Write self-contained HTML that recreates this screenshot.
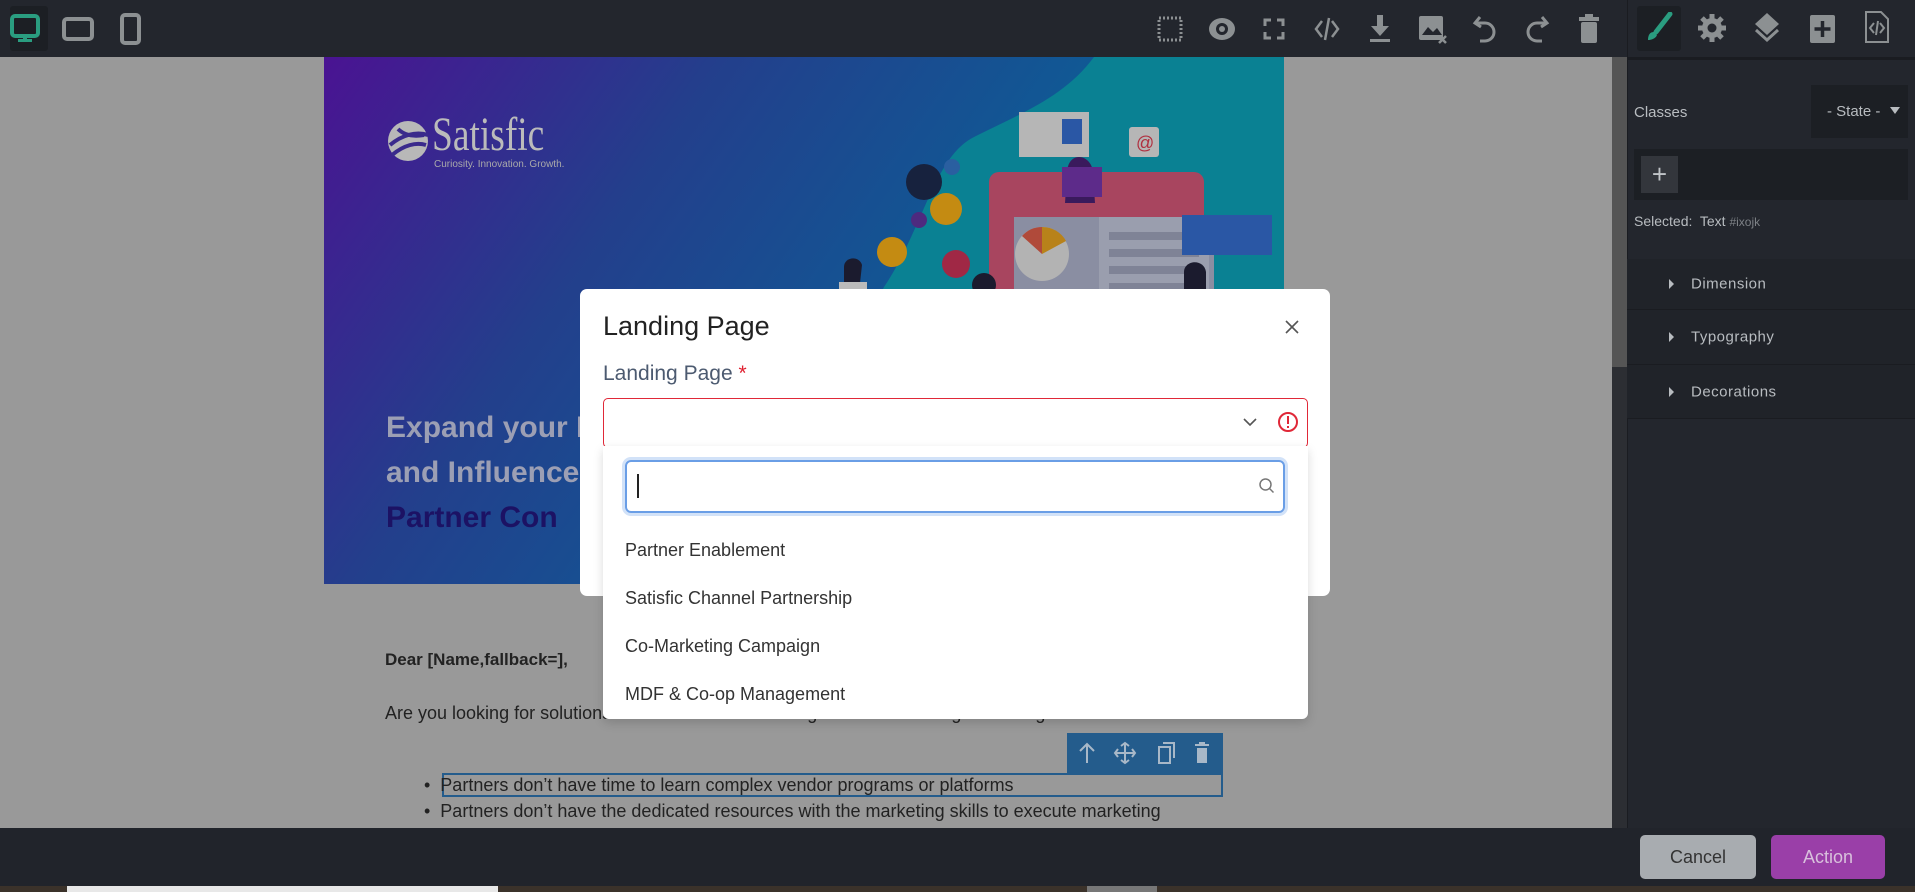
<!DOCTYPE html>
<html><head><meta charset="utf-8"><style>
*{box-sizing:border-box;margin:0;padding:0}
body{width:1915px;height:892px;overflow:hidden;background:#999;font-family:"Liberation Sans",sans-serif;position:relative}
.abs{position:absolute}
.top{left:0;top:0;width:1627px;height:57px;background:#23262d}
.rp{left:1627px;top:0;width:288px;height:828px;background:#23262d}
.bot{left:0;top:828px;width:1915px;height:59px;background:#21242b}
.strip{left:0;top:886px;width:1915px;height:6px;background:#3b322a}
.sec{position:absolute;left:1627px;width:288px;border-bottom:1px solid #1a1c21;background:#202329;color:#b8bcc0;font-size:15px;letter-spacing:.5px}
.sec span{position:absolute;left:64px;top:50%;transform:translateY(-50%)}
.sec i{position:absolute;left:42px;top:50%;margin-top:-5px;border-left:5px solid #b8bcc0;border-top:5px solid transparent;border-bottom:5px solid transparent}
.dd{font-size:18px;color:#333;position:absolute;left:625px}
</style></head><body>
<div class="abs top"></div>
<div class="abs" style="left:10px;top:6px;width:38px;height:45px;background:#1c1f24;border-radius:3px"></div>
<svg class="abs" style="left:10px;top:14px" width="30" height="30" viewBox="0 0 30 30"><rect x="2" y="2" width="26" height="20" rx="3" fill="none" stroke="#2a9d80" stroke-width="4"/><rect x="13" y="22" width="4" height="4" fill="#2a9d80"/><rect x="8" y="25" width="14" height="3" fill="#2a9d80"/></svg>
<svg class="abs" style="left:62px;top:17px" width="32" height="24"><rect x="2" y="2" width="28" height="20" rx="3" fill="none" stroke="#8c9092" stroke-width="4"/></svg>
<svg class="abs" style="left:120px;top:13px" width="22" height="32"><rect x="2" y="2" width="17" height="28" rx="3" fill="none" stroke="#8c9092" stroke-width="4"/></svg>
<svg class="abs" style="left:1157px;top:16px" width="26" height="26"><rect x="2" y="2" width="22" height="22" fill="none" stroke="#8c9092" stroke-width="3" stroke-dasharray="2 2"/></svg>
<svg class="abs" style="left:1207px;top:16px" width="30" height="26"><ellipse cx="15" cy="13" rx="13" ry="11" fill="#8c9092"/><circle cx="15" cy="13" r="6" fill="#23262d"/><circle cx="15" cy="13" r="3" fill="#8c9092"/></svg>
<svg class="abs" style="left:1263px;top:18px" width="22" height="22" fill="none" stroke="#8c9092" stroke-width="3"><path d="M2 8V2h6M14 2h6v6M20 14v6h-6M8 20H2v-6"/></svg>
<svg class="abs" style="left:1313px;top:15px" width="28" height="28" fill="none" stroke="#8c9092" stroke-width="2.5"><path d="M9 6L3 14l6 8M19 6l6 8-6 8M16 3l-4 22"/></svg>
<svg class="abs" style="left:1369px;top:15px" width="22" height="28" fill="#8c9092"><path d="M8 0h6v11h6l-9 10-9-10h6z"/><rect x="1" y="24" width="20" height="3"/></svg>
<svg class="abs" style="left:1418px;top:15px" width="30" height="30" fill="#8c9092"><rect x="1" y="1" width="24" height="24" rx="2"/><path d="M4 20l6-8 5 5 4-4 5 7z" fill="#23262d"/><path d="M21 21l7 7M28 21l-7 7" stroke="#8c9092" stroke-width="2.5"/></svg>
<svg class="abs" style="left:1472px;top:15px" width="26" height="28" fill="none" stroke="#8c9092" stroke-width="3"><path d="M8 2L3 8l6 4M3 8h10a9 9 0 1 1 0 18H8"/></svg>
<svg class="abs" style="left:1524px;top:15px" width="26" height="28" fill="none" stroke="#8c9092" stroke-width="3"><path d="M18 2l5 6-6 4M23 8H13a9 9 0 1 0 0 18h5"/></svg>
<svg class="abs" style="left:1578px;top:14px" width="22" height="30" fill="#8c9092"><rect x="1" y="3" width="20" height="4"/><rect x="7" y="0" width="8" height="4"/><rect x="3" y="8" width="16" height="21" rx="2"/></svg>
<div class="abs rp"></div>
<div class="abs" style="left:1627px;top:0;width:1px;height:828px;background:#1a1c21"></div>
<div class="abs" style="left:1637px;top:6px;width:44px;height:45px;background:#1c1f24;border-radius:3px"></div>
<svg class="abs" style="left:1644px;top:12px" width="30" height="32"><path d="M26 2L12 20" stroke="#2a9d80" stroke-width="5" stroke-linecap="round"/><path d="M10 20c-4 0-6 3-6 8 4 0 8-2 9-5z" fill="#2a9d80"/></svg>
<svg class="abs" style="left:1697px;top:13px" width="30" height="30" viewBox="0 0 30 30"><circle cx="15" cy="15" r="10" fill="#8c9092"/><g stroke="#8c9092" stroke-width="5"><path d="M15 1v28M1 15h28M5 5l20 20M25 5L5 25"/></g><circle cx="15" cy="15" r="4.5" fill="#23262d"/></svg>
<svg class="abs" style="left:1753px;top:13px" width="28" height="32" fill="#8c9092"><path d="M14 0l12 11-12 11L2 11z"/><path d="M3 17l11 10 11-10" fill="none" stroke="#8c9092" stroke-width="3"/></svg>
<svg class="abs" style="left:1810px;top:15px" width="26" height="28"><rect x="0" y="0" width="25" height="28" rx="2" fill="#8c9092"/><path d="M12.5 6v16M4.5 14h16" stroke="#23262d" stroke-width="3.5"/></svg>
<svg class="abs" style="left:1864px;top:10px" width="26" height="34" fill="none" stroke="#8c9092" stroke-width="2"><path d="M2 2h15l7 7v23H2z"/><path d="M10 13l-4 5 4 5M16 13l4 5-4 5M14 11l-2 14"/></svg>
<div class="abs" style="left:1627px;top:57px;width:288px;height:3px;background:#1a1c21"></div>
<div class="abs" style="left:1634px;top:104px;color:#b8bcc0;font-size:15px">Classes</div>
<div class="abs" style="left:1811px;top:85px;width:97px;height:53px;background:#1c1f24;color:#b8bcc0;font-size:15px;line-height:53px;padding-left:16px">- State -<span style="position:absolute;right:8px;top:22px;border-top:7px solid #b8bcc0;border-left:5px solid transparent;border-right:5px solid transparent"></span></div>
<div class="abs" style="left:1634px;top:149px;width:274px;height:51px;background:#1c1f24"></div>
<div class="abs" style="left:1641px;top:156px;width:37px;height:37px;background:#33363c;color:#c0c4c8;font-size:26px;text-align:center;line-height:36px">+</div>
<div class="abs" style="left:1634px;top:213px;color:#b8bcc0;font-size:14px">Selected:&nbsp; Text <span style="color:#7d8186;font-size:12px">#ixojk</span></div>
<div class="sec" style="top:259px;height:51px"><i></i><span>Dimension</span></div>
<div class="sec" style="top:310px;height:55px"><i></i><span>Typography</span></div>
<div class="sec" style="top:365px;height:54px"><i></i><span>Decorations</span></div>
<div class="abs" style="left:1612px;top:57px;width:15px;height:771px;background:#2c2e33"></div>
<div class="abs" style="left:1612px;top:57px;width:15px;height:310px;background:#555"></div>
<!-- banner -->
<div class="abs" style="left:324px;top:57px;width:960px;height:527px;background:linear-gradient(125deg,#4a1392 0%,#233f8c 30%,#0f5a95 60%,#07689a 100%);overflow:hidden">
<svg class="abs" style="left:0;top:0" width="960" height="527">
<path d="M770 0C740 40 700 55 650 80 610 100 600 170 560 230 520 300 560 527 560 527H960V0z" fill="#0a8193"/>
<path d="M720 527c20-120 120-210 240-240V527z" fill="#0b5e9c"/>
<rect x="690" y="235" width="230" height="292" rx="8" fill="#8a8ea2"/>
<rect x="665" y="115" width="215" height="140" rx="10" fill="#a8455f"/>
<rect x="665" y="140" width="215" height="10" fill="#a8455f"/>
<rect x="690" y="160" width="200" height="200" fill="#8a8ea2"/>
<rect x="775" y="160" width="110" height="200" fill="#9a9eae"/>
<g fill="#7f8396"><rect x="785" y="175" width="90" height="8"/><rect x="785" y="192" width="90" height="8"/><rect x="785" y="209" width="90" height="8"/><rect x="785" y="226" width="90" height="8"/><rect x="785" y="243" width="90" height="8"/></g>
<circle cx="718" cy="197" r="27" fill="#b3b3b3"/><path d="M718 197V170a27 27 0 0 1 24 14z" fill="#b8821a"/><path d="M718 197l-20-18a27 27 0 0 1 20-9z" fill="#b04a3a"/>
<rect x="695" y="55" width="70" height="45" fill="#b6b6b6"/><rect x="738" y="62" width="20" height="25" fill="#2a57a5"/>
<rect x="805" y="70" width="30" height="30" rx="3" fill="#b6b6b6"/><text x="812" y="92" font-size="18" fill="#b03040" font-family="Liberation Sans">@</text>
<rect x="858" y="158" width="90" height="40" fill="#2a57a5"/>
<path d="M755 100c-8 0-12 8-12 16l-2 30h30l-2-30c0-8-6-16-14-16z" fill="#3a1a5c"/>
<rect x="738" y="110" width="40" height="30" fill="#5d2b8a"/>
<circle cx="600" cy="125" r="18" fill="#17223e"/><circle cx="622" cy="152" r="16" fill="#c48b12"/><circle cx="595" cy="163" r="8" fill="#4d2a7f"/><circle cx="628" cy="110" r="8" fill="#2a5fa0"/>
<circle cx="568" cy="195" r="15" fill="#c48b12"/>
<circle cx="632" cy="207" r="14" fill="#a02845"/>
<path d="M520 210c0-10 15-12 18-2l-2 18h-16z" fill="#1b1b2e"/><rect x="515" y="225" width="28" height="50" fill="#bbb"/>
<circle cx="660" cy="228" r="12" fill="#1b1b2e"/>
<path d="M860 215c0-12 20-14 22 0v20h-22z" fill="#1b1b2e"/><rect x="860" y="235" width="40" height="50" fill="#0d4f8e"/>
</svg>
<svg class="abs" style="left:60px;top:58px" width="50" height="52"><circle cx="24" cy="26" r="20" fill="#b8b8b8"/><path d="M6 30c12-10 26-14 38-10M8 40c12-10 24-13 34-10M14 14c6 6 14 8 26 6" stroke="#3a2a8c" stroke-width="4" fill="none"/></svg>
<div class="abs" style="left:108px;top:50px;color:#bbb;font-family:'Liberation Serif',serif;font-size:48px;transform:scaleX(.78);transform-origin:left">Satisfic</div>
<div class="abs" style="left:110px;top:102px;color:#aaa;font-size:10px">Curiosity. Innovation. Growth.</div>
<div class="abs" style="left:62px;top:348px;color:#9c9fb4;font-size:30px;font-weight:bold;line-height:45px">Expand your P<br>and Influence<br><span style="color:#1c1264">Partner Con</span></div>
</div>
<div class="abs" style="left:385px;top:650px;color:#222;font-size:17px;font-weight:bold">Dear [Name,fallback=],</div>
<div class="abs" style="left:385px;top:703px;color:#222;font-size:18px">Are you looking for solutions to overcome the challenges of the following marketing</div>
<div class="abs" style="left:1067px;top:733px;width:156px;height:40px;background:#245c8c"></div>
<svg class="abs" style="left:1075px;top:741px" width="140" height="24" fill="none" stroke="#a8b8c8" stroke-width="2"><path d="M12 22V3M5 10l7-7 7 7"/><path d="M50 2v20M40 12h20M46 5l4-3 4 3M46 19l4 3 4-3M43 8l-3 4 3 4M57 8l3 4-3 4"/><rect x="84" y="6" width="11" height="16"/><path d="M88 2h11v15"/><path d="M120 4h14M124 2h6"/><rect x="122" y="7" width="10" height="15" fill="#a8b8c8" stroke="none"/></svg>
<div class="abs" style="left:442px;top:773px;width:781px;height:24px;border:2px solid #245c8c"></div>
<div class="abs" style="left:424px;top:774px;color:#222;font-size:18px;line-height:22px">•&nbsp; Partners don’t have time to learn complex vendor programs or platforms</div>
<div class="abs" style="left:424px;top:800px;color:#222;font-size:18px;line-height:22px">•&nbsp; Partners don’t have the dedicated resources with the marketing skills to execute marketing</div>
<!-- modal -->
<div class="abs" style="left:580px;top:289px;width:750px;height:307px;background:#fff;border-radius:7px"></div>
<div class="abs" style="left:603px;top:311px;color:#222;font-size:27px">Landing Page</div>
<svg class="abs" style="left:1285px;top:320px" width="14" height="14" stroke="#555" stroke-width="1.6"><path d="M1 1l12 12M13 1L1 13"/></svg>
<div class="abs" style="left:603px;top:362px;color:#4c5a70;font-size:21px">Landing Page <span style="color:#e02030">*</span></div>
<div class="abs" style="left:603px;top:398px;width:705px;height:50px;border:1.5px solid #e02838;border-radius:5px"></div>
<svg class="abs" style="left:1242px;top:416px" width="16" height="12" fill="none" stroke="#555" stroke-width="1.6"><path d="M2 3l6 6 6-6"/></svg>
<svg class="abs" style="left:1277px;top:411px" width="22" height="22" fill="none" stroke="#e02838" stroke-width="2"><circle cx="11" cy="11" r="9"/><path d="M11 5v8M11 15v2"/></svg>
<div class="abs" style="left:603px;top:446px;width:705px;height:273px;background:#fff;border-radius:0 0 6px 6px;box-shadow:0 4px 10px rgba(0,0,0,.15)"></div>
<div class="abs" style="left:625px;top:460px;width:660px;height:53px;border:2px solid #6a9ee6;border-radius:6px;box-shadow:0 0 0 3px #d2e2f8"></div>
<div class="abs" style="left:637px;top:474px;width:2px;height:24px;background:#222"></div>
<svg class="abs" style="left:1258px;top:477px" width="18" height="18" fill="none" stroke="#777" stroke-width="1.5"><circle cx="7.5" cy="7.5" r="5.5"/><path d="M11.5 11.5l4 4"/></svg>
<div class="dd" style="top:540px">Partner Enablement</div>
<div class="dd" style="top:588px">Satisfic Channel Partnership</div>
<div class="dd" style="top:636px">Co-Marketing Campaign</div>
<div class="dd" style="top:684px">MDF &amp; Co-op Management</div>
<div class="abs bot"></div>
<div class="abs" style="left:1640px;top:835px;width:116px;height:44px;background:#a8acb0;border-radius:5px;color:#333;font-size:18px;text-align:center;line-height:44px">Cancel</div>
<div class="abs" style="left:1771px;top:835px;width:114px;height:44px;background:#9a3fa8;border-radius:5px;color:#d8c0dc;font-size:18px;text-align:center;line-height:44px">Action</div>
<div class="abs strip"></div>
<div class="abs" style="left:67px;top:886px;width:431px;height:6px;background:#e8e8e8"></div>
<div class="abs" style="left:1087px;top:886px;width:70px;height:6px;background:#777"></div>
</body></html>
